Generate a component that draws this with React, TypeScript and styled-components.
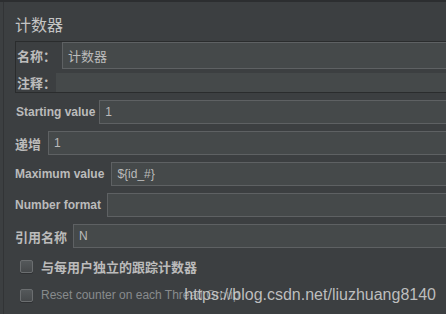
import React from "react";
import styled, { createGlobalStyle } from "styled-components";

const Global = createGlobalStyle`
  html, body { margin: 0; padding: 0; background: #3c3f41; }
  body { width: 446px; height: 314px; overflow: hidden; }
`;

const latin = `"Liberation Sans", Arial, "Noto Sans CJK SC", sans-serif`;
const cjk = `"Noto Sans CJK SC", "Liberation Sans", sans-serif`;

const Screen = styled.div`
  position: relative;
  width: 446px;
  height: 314px;
  overflow: hidden;
  background: #3c3f41;
  border-top: 2px solid #2c2e30;
  box-sizing: border-box;
  padding-left: 3px;
`;

const Panel = styled.div`
  width: 480px;
  height: 100%;
  border-left: 1px solid #323436;
  box-sizing: border-box;
  padding: 12px 0 0 11px;
  display: flex;
  flex-direction: column;
  color: #bbbbbb;
`;

const Title = styled.div`
  font-family: ${cjk};
  font-size: 16px;
  line-height: 20px;
  height: 20px;
  color: #c4c4c4;
`;

const GroupBox = styled.div`
  margin-top: 7px;
  border: 1px solid #2a2c2d;
  display: flex;
  flex-direction: column;
  gap: 4px;
`;

const GroupRow = styled.div<{ $h: number; $gap: number }>`
  display: flex;
  align-items: stretch;
  height: ${(p) => p.$h}px;
  gap: ${(p) => p.$gap}px;
  padding-left: 1px;
`;

const GroupLabel = styled.div`
  font-family: ${cjk};
  font-size: 13px;
  font-weight: 700;
  display: flex;
  align-items: center;
  color: #bdbdbd;
`;

const Field = styled.div<{ $bordered?: boolean; $cjk?: boolean }>`
  flex: 1;
  box-sizing: border-box;
  background: #45494a;
  border: ${(p) => (p.$bordered === false ? "none" : "1px solid #5e6163")};
  padding-left: 5px;
  display: flex;
  align-items: center;
  font-family: ${(p) => (p.$cjk ? cjk : latin)};
  font-size: ${(p) => (p.$cjk ? 13 : 12)}px;
  color: #bbbbbb;
  white-space: nowrap;
`;

const Form = styled.div`
  margin-top: 7px;
  display: flex;
  flex-direction: column;
  gap: 7px;
`;

const FormRow = styled.div<{ $gap: number; $indent: number }>`
  display: flex;
  height: 24px;
  gap: ${(p) => p.$gap}px;
  padding-left: ${(p) => p.$indent}px;
`;

const FormLabel = styled.div<{ $cjk?: boolean }>`
  display: flex;
  align-items: center;
  font-family: ${(p) => (p.$cjk ? cjk : latin)};
  font-size: ${(p) => (p.$cjk ? 13 : 12)}px;
  font-weight: 700;
  color: #bbbbbb;
  white-space: nowrap;
`;

const Checks = styled.div`
  margin-top: 8px;
  padding-left: 5px;
  display: flex;
  flex-direction: column;
  gap: 9px;
`;

const CheckRow = styled.div<{ $disabled?: boolean }>`
  display: flex;
  align-items: center;
  height: 20px;
  gap: 8px;
  color: ${(p) => (p.$disabled ? "#888b8d" : "#bbbbbb")};
`;

const Box = styled.span`
  width: 13px;
  height: 13px;
  box-sizing: border-box;
  border-radius: 2px;
  border: 1px solid #6b6e70;
  background: linear-gradient(#54585a, #46494b);
  box-shadow: 0 1px 0 #2f3133;
`;

const CheckText = styled.span<{ $cjk?: boolean }>`
  font-family: ${(p) => (p.$cjk ? cjk : latin)};
  font-size: ${(p) => (p.$cjk ? 13 : 12)}px;
  font-weight: ${(p) => (p.$cjk ? 700 : 400)};
  white-space: nowrap;
`;

const Watermark = styled.div`
  position: absolute;
  right: 10px;
  bottom: 9px;
  font-family: ${latin};
  font-size: 16px;
  line-height: 20px;
  color: rgba(214, 214, 214, 0.85);
  white-space: nowrap;
`;

const rows = [
  { label: "Starting value", value: "1", gap: 4, indent: 1 },
  { label: "递增", value: "1", gap: 7, indent: 0, cjk: true },
  { label: "Maximum value", value: "${id_#}", gap: 7, indent: 0 },
  { label: "Number format", value: "", gap: 6, indent: 0 },
  { label: "引用名称", value: "N", gap: 6, indent: 0, cjk: true },
];

export default function App() {
  return (
    <>
      <Global />
      <Screen>
        <Panel>
          <Title>计数器</Title>
          <GroupBox>
            <GroupRow $h={27} $gap={6}>
              <GroupLabel>名称：</GroupLabel>
              <Field $cjk>计数器</Field>
            </GroupRow>
            <GroupRow $h={19} $gap={0}>
              <GroupLabel>注释：</GroupLabel>
              <Field $bordered={false} />
            </GroupRow>
          </GroupBox>
          <Form>
            {rows.map((r) => (
              <FormRow key={r.label} $gap={r.gap} $indent={r.indent}>
                <FormLabel $cjk={r.cjk}>{r.label}</FormLabel>
                <Field>{r.value}</Field>
              </FormRow>
            ))}
          </Form>
          <Checks>
            <CheckRow>
              <Box />
              <CheckText $cjk>与每用户独立的跟踪计数器</CheckText>
            </CheckRow>
            <CheckRow $disabled>
              <Box />
              <CheckText>Reset counter on each Thread Group</CheckText>
            </CheckRow>
          </Checks>
        </Panel>
        <Watermark>https://blog.csdn.net/liuzhuang8140</Watermark>
      </Screen>
    </>
  );
}
